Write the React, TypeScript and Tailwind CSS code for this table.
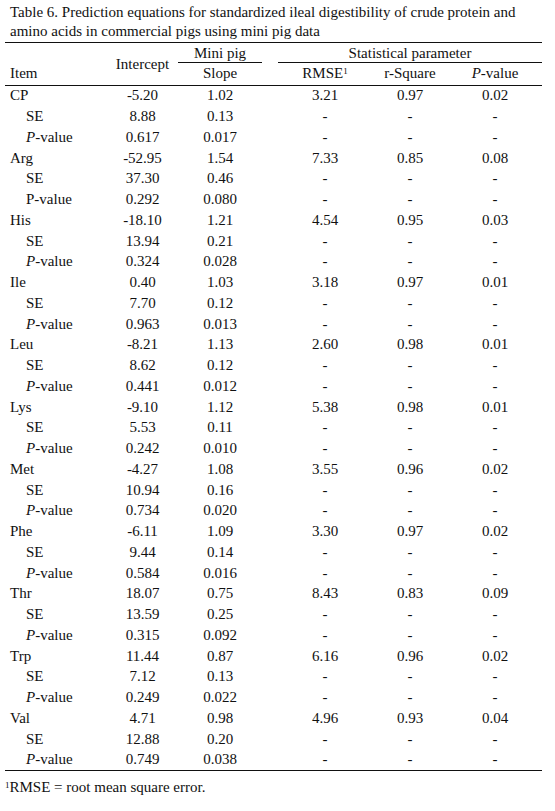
const amino = [
  ['CP', '-5.20', '1.02', '3.21', '0.97', '0.02', '8.88', '0.13', '0.617', '0.017'],
  ['Arg', '-52.95', '1.54', '7.33', '0.85', '0.08', '37.30', '0.46', '0.292', '0.080'],
  ['His', '-18.10', '1.21', '4.54', '0.95', '0.03', '13.94', '0.21', '0.324', '0.028'],
  ['Ile', '0.40', '1.03', '3.18', '0.97', '0.01', '7.70', '0.12', '0.963', '0.013'],
  ['Leu', '-8.21', '1.13', '2.60', '0.98', '0.01', '8.62', '0.12', '0.441', '0.012'],
  ['Lys', '-9.10', '1.12', '5.38', '0.98', '0.01', '5.53', '0.11', '0.242', '0.010'],
  ['Met', '-4.27', '1.08', '3.55', '0.96', '0.02', '10.94', '0.16', '0.734', '0.020'],
  ['Phe', '-6.11', '1.09', '3.30', '0.97', '0.02', '9.44', '0.14', '0.584', '0.016'],
  ['Thr', '18.07', '0.75', '8.43', '0.83', '0.09', '13.59', '0.25', '0.315', '0.092'],
  ['Trp', '11.44', '0.87', '6.16', '0.96', '0.02', '7.12', '0.13', '0.249', '0.022'],
  ['Val', '4.71', '0.98', '4.96', '0.93', '0.04', '12.88', '0.20', '0.749', '0.038'],
];

const cols = 'grid grid-cols-[102px_71px_84px_16px_94px_76px_94px]';

function Row({ label, vals, indent, italicP }: { label: React.ReactNode; vals: string[]; indent?: boolean; italicP?: boolean }) {
  return (
    <div className={`${cols} h-[20.75px] items-center`}>
      <div className={indent ? 'pl-[21px]' : 'pl-[5px]'}>
        {italicP ? (
          <>
            <i>P</i>-value
          </>
        ) : (
          label
        )}
      </div>
      <div className="text-center">{vals[0]}</div>
      <div className="text-center">{vals[1]}</div>
      <div />
      <div className="text-center">{vals[2]}</div>
      <div className="text-center">{vals[3]}</div>
      <div className="text-center">{vals[4]}</div>
    </div>
  );
}

export default function App() {
  return (
    <div className="w-[555px] h-[811px] bg-white text-[#111] text-[15px] leading-[19px] overflow-hidden" style={{ fontFamily: '"Liberation Serif", serif' }}>
      <div className="pl-[10px] pt-[3px] h-[42px]">
        <p>Table 6. Prediction equations for standardized ileal digestibility of crude protein and</p>
        <p>amino acids in commercial pigs using mini pig data</p>
      </div>

      <div className="ml-[5px] w-[537px]">
        {/* Header */}
        <div className={`${cols} grid-rows-[20px_21.5px] border-t-[1.5px] border-b border-[#111]`}>
          <div className="col-start-2 row-start-1 row-span-2 flex items-center justify-center pt-[1px]">Intercept</div>
          <div className="col-start-3 row-start-1 text-center border-b-[1.5px] border-[#111] leading-[21px]">Mini pig</div>
          <div className="col-start-5 col-span-3 row-start-1 text-center border-b-[1.5px] border-[#111] leading-[21px]">Statistical parameter</div>
          <div className="col-start-1 row-start-2 pl-[5px] self-center">Item</div>
          <div className="col-start-3 row-start-2 text-center self-center">Slope</div>
          <div className="col-start-5 row-start-2 text-center self-center">
            RMSE<sup className="text-[9px]">1</sup>
          </div>
          <div className="col-start-6 row-start-2 text-center self-center">r-Square</div>
          <div className="col-start-7 row-start-2 text-center self-center">
            <i>P</i>-value
          </div>
        </div>

        {/* Body */}
        <div className="border-b border-[#111]">
          {amino.map((a, i) => (
            <div key={a[0]}>
              <Row label={a[0]} vals={[a[1], a[2], a[3], a[4], a[5]]} />
              <Row label="SE" indent vals={[a[6], a[7], '-', '-', '-']} />
              <Row label="P-value" indent italicP={i !== 1} vals={[a[8], a[9], '-', '-', '-']} />
            </div>
          ))}
        </div>
        <p className="pt-[7px]">
          <sup className="text-[9px]">1</sup>RMSE = root mean square error.
        </p>
      </div>
    </div>
  );
}
